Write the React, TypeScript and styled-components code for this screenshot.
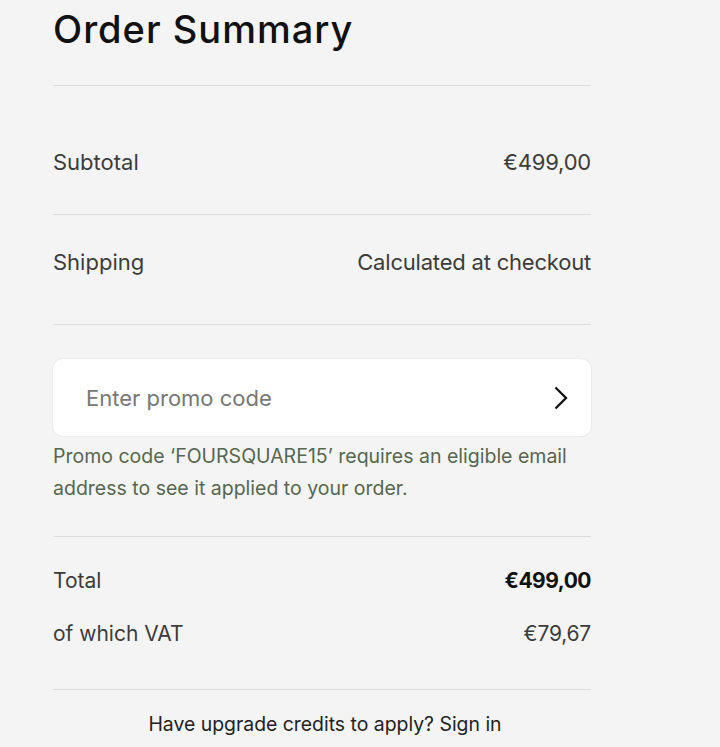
import React from 'react';
import styled, { createGlobalStyle } from 'styled-components';

const GlobalStyle = createGlobalStyle`
  html, body {
    margin: 0;
    padding: 0;
    background: #f4f4f4;
  }
  body {
    font-family: Inter, "Liberation Sans", Arial, sans-serif;
    -webkit-font-smoothing: antialiased;
  }
`;

export default function App() {
  return (
    <Page>
      <GlobalStyle />
      <Summary>
        <Title>Order Summary</Title>
        <Divider />
        <Row $pad="62px 0 38px">
          <Label>Subtotal</Label>
          <Value>€499,00</Value>
        </Row>
        <Divider />
        <Row $pad="33px 0 48px">
          <Label>Shipping</Label>
          <Value>Calculated at checkout</Value>
        </Row>
        <Divider />
        <PromoBox>
          <PromoInput placeholder="Enter promo code" />
          <ArrowButton aria-label="Apply promo code">
            <svg width="16" height="24" viewBox="0 0 16 24" fill="none">
              <path d="M2.5 1.5l10.5 10.5-10.5 10.5" stroke="#111" strokeWidth="2.3" />
            </svg>
          </ArrowButton>
        </PromoBox>
        <PromoNote>
          Promo code ‘FOURSQUARE15’ requires an eligible email address to see it applied to your order.
        </PromoNote>
        <Divider />
        <Totals>
          <Row $size={21}>
            <Label>Total</Label>
            <Value $strong>€499,00</Value>
          </Row>
          <Row $size={21}>
            <Label>of which VAT</Label>
            <Value>€79,67</Value>
          </Row>
        </Totals>
        <Divider />
        <Footer>Have upgrade credits to apply? Sign in</Footer>
      </Summary>
    </Page>
  );
}

const Page = styled.div`
  min-height: 747px;
  background: #f4f4f4;
`;

const Summary = styled.section`
  width: 538px;
  margin-left: 53px;
  display: flex;
  flex-direction: column;
`;

const Title = styled.h2`
  margin: 0;
  padding: 5px 0 32px;
  font-size: 38px;
  line-height: 48px;
  font-weight: 500;
  color: #111;
  letter-spacing: 1px;
`;

const Divider = styled.hr`
  margin: 0;
  border: 0;
  height: 1px;
  background: #dcdcdc;
`;

const Row = styled.div<{ $pad?: string; $size?: number }>`
  display: flex;
  justify-content: space-between;
  align-items: center;
  padding: ${p => p.$pad || '0'};
  font-size: ${p => p.$size || 22}px;
  line-height: 28px;
`;

const Label = styled.span`
  color: #3c3c3c;
`;

const Value = styled.span<{ $strong?: boolean }>`
  color: ${p => (p.$strong ? '#111' : '#3c3c3c')};
  font-weight: ${p => (p.$strong ? 700 : 400)};
  letter-spacing: ${p => (p.$strong ? '-0.5px' : '-0.2px')};
`;

const PromoBox = styled.div`
  margin-top: 34px;
  height: 77px;
  background: #fff;
  border-radius: 10px;
  box-shadow: 0 0 0 1px #ececec;
  display: flex;
  align-items: center;
  padding: 0 21px 0 31px;
`;

const PromoInput = styled.input`
  flex: 1;
  border: 0;
  outline: none;
  background: transparent;
  font-family: inherit;
  font-size: 22px;
  color: #111;
  &::placeholder {
    color: #777;
  }
`;

const ArrowButton = styled.button`
  border: 0;
  background: none;
  padding: 0;
  width: 18px;
  display: flex;
  align-items: center;
  justify-content: center;
  cursor: pointer;
`;

const PromoNote = styled.p`
  margin: 4px 0 32px;
  font-size: 19.5px;
  line-height: 32px;
  color: #56664f;
`;

const Totals = styled.div`
  display: flex;
  flex-direction: column;
  gap: 25px;
  padding: 30px 0 41px;
`;

const Footer = styled.p`
  margin: 0;
  padding: 21px 0 21px 6px;
  text-align: center;
  font-size: 19.4px;
  line-height: 26px;
  color: #222;
`;
